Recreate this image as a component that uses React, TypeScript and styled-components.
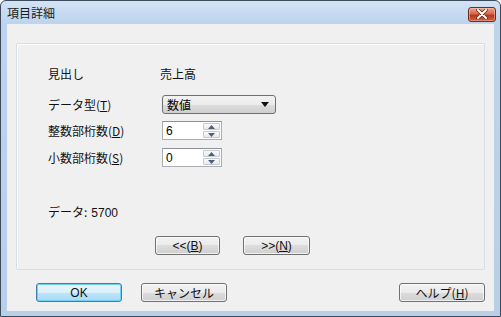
import React from "react";
import styled, { createGlobalStyle } from "styled-components";

const GlobalStyle = createGlobalStyle`
  html, body {
    margin: 0;
    padding: 0;
    background: #ffffff;
  }
  body {
    font-family: "Liberation Sans", "Noto Sans CJK JP", sans-serif;
    font-size: 12px;
    color: #000;
  }
`;

const Window = styled.div`
  width: 501px;
  height: 317px;
  box-sizing: border-box;
  border: 1px solid #3c4a5c;
  border-radius: 6px 6px 0 0;
  background: linear-gradient(to bottom, #d3e3f5 0px, #bdd3ee 22px, #b8cfea 100%);
  display: flex;
  flex-direction: column;
  overflow: hidden;
`;

const TitleBar = styled.div`
  height: 23px;
  display: flex;
  align-items: center;
  justify-content: space-between;
  padding: 0 4px 0 6px;
  flex-shrink: 0;
`;

const Title = styled.span`
  font-family: "Noto Sans CJK JP", sans-serif;
  font-size: 12px;
  line-height: 14px;
  color: #1a1a1a;
  margin-top: 1px;
`;

const CloseButton = styled.div`
  width: 28px;
  height: 15px;
  margin-top: 3px;
  box-sizing: border-box;
  border: 1px solid #6e2a1c;
  border-radius: 3px;
  background: linear-gradient(to bottom, #eaa28c 0%, #d7684a 45%, #b93a1c 55%, #cc5f3c 100%);
  box-shadow: inset 0 0 0 1px rgba(255, 210, 190, 0.45);
  display: flex;
  align-items: center;
  justify-content: center;
`;

const Client = styled.div`
  flex: 1;
  margin: 0 6px 5px 6px;
  background: #f0f0f0;
  display: flex;
  flex-direction: column;
  padding: 19px 9px 0 9px;
`;

const Panel = styled.div`
  height: 227px;
  box-sizing: border-box;
  border: 1px solid #d5dfe5;
  border-radius: 2px;
  box-shadow: inset 1px 1px 0 #ffffff;
  padding: 21px 0 0 31px;
  display: flex;
  flex-direction: column;
`;

const Row = styled.div<{ $top: number; $height: number }>`
  display: flex;
  align-items: center;
  margin-top: ${p => p.$top}px;
  height: ${p => p.$height}px;
`;

const Label = styled.div`
  width: 114px;
  font-family: "Noto Sans CJK JP", sans-serif;
  font-size: 12px;
  line-height: 14px;
  color: #111;
  white-space: nowrap;
`;

const Value = styled.div`
  font-family: "Noto Sans CJK JP", sans-serif;
  font-size: 12px;
  line-height: 14px;
  color: #111;
  margin-left: -2px;
`;

const Select = styled.div`
  width: 114px;
  height: 19px;
  box-sizing: border-box;
  border: 1px solid #707070;
  border-radius: 3px;
  background: linear-gradient(to bottom, #f2f2f2 0%, #ebebeb 50%, #dddddd 50%, #cfcfcf 100%);
  display: flex;
  align-items: center;
  justify-content: space-between;
  padding: 0 6px 0 4px;
  font-family: "Noto Sans CJK JP", sans-serif;
  font-size: 12px;
  line-height: 14px;
`;

const Spin = styled.div`
  width: 60px;
  height: 19px;
  box-sizing: border-box;
  border: 1px solid #abadb3;
  border-top-color: #8e9197;
  background: #fff;
  display: flex;
  align-items: stretch;
`;

const SpinText = styled.div`
  flex: 1;
  padding-left: 3px;
  display: flex;
  align-items: center;
  font-family: "Liberation Sans", sans-serif;
  font-size: 12px;
`;

const SpinButtons = styled.div`
  width: 17px;
  display: flex;
  flex-direction: column;
  padding: 1px;
  gap: 1px;
`;

const SpinHalf = styled.div`
  flex: 1;
  border: 1px solid #c3cad2;
  border-radius: 1px;
  background: linear-gradient(to bottom, #fbfbfc, #e6e9ee);
  display: flex;
  align-items: center;
  justify-content: center;
`;

const DataText = styled.div`
  font-family: "Noto Sans CJK JP", sans-serif;
  font-size: 12px;
  line-height: 14px;
  color: #111;
`;

const Num = styled.span`
  font-family: "Liberation Sans", sans-serif;
  margin-left: 4px;
`;

const NavRow = styled.div`
  display: flex;
  margin-top: 15px;
  margin-left: 107px;
  gap: 23px;
`;

const Button = styled.div<{ $width: number; $default?: boolean }>`
  width: ${p => p.$width}px;
  height: 19px;
  box-sizing: border-box;
  border: 1px solid ${p => (p.$default ? "#3c7fb1" : "#707070")};
  border-radius: 3px;
  background: ${p =>
    p.$default
      ? "linear-gradient(to bottom, #eaf6fd 0%, #d9f0fc 50%, #bee6fd 50%, #a7d9f5 100%)"
      : "linear-gradient(to bottom, #f2f2f2 0%, #ebebeb 50%, #dddddd 50%, #cfcfcf 100%)"};
  box-shadow: ${p =>
    p.$default ? "inset 0 0 0 1px #6fd0f3" : "inset 0 0 0 1px rgba(255,255,255,0.7)"};
  display: flex;
  align-items: center;
  justify-content: center;
  font-family: "Noto Sans CJK JP", sans-serif;
  font-size: 12px;
  line-height: 14px;
  color: #111;
`;

const Latin = styled.span`
  font-family: "Liberation Sans", sans-serif;
`;

const Footer = styled.div`
  display: flex;
  align-items: center;
  justify-content: space-between;
  margin-top: 13px;
  padding-left: 20px;
`;

const ButtonGroup = styled.div`
  display: flex;
  gap: 19px;
`;

const Arrow = ({ up }: { up?: boolean }) => (
  <svg width="7" height="4" viewBox="0 0 7 4">
    <path d={up ? "M0 4 L3.5 0 L7 4 Z" : "M0 0 L3.5 4 L7 0 Z"} fill="#4f6078" />
  </svg>
);

const SpinBox = ({ value }: { value: string }) => (
  <Spin>
    <SpinText>{value}</SpinText>
    <SpinButtons>
      <SpinHalf>
        <Arrow up />
      </SpinHalf>
      <SpinHalf>
        <Arrow />
      </SpinHalf>
    </SpinButtons>
  </Spin>
);

const App: React.FC = () => {
  return (
    <>
      <GlobalStyle />
      <Window>
        <TitleBar>
          <Title>項目詳細</Title>
          <CloseButton>
            <svg width="12" height="10" viewBox="0 0 12 10">
              <path
                d="M2 1 L10 9 M10 1 L2 9"
                stroke="#5a2418"
                strokeWidth="3.4"
                strokeLinecap="round"
              />
              <path
                d="M2 1 L10 9 M10 1 L2 9"
                stroke="#ffffff"
                strokeWidth="2"
                strokeLinecap="round"
              />
            </svg>
          </CloseButton>
        </TitleBar>
        <Client>
          <Panel>
            <Row $top={0} $height={18}>
              <Label>見出し</Label>
              <Value>売上高</Value>
            </Row>
            <Row $top={12} $height={19}>
              <Label>
                データ型(<u>T</u>)
              </Label>
              <Select>
                <span>数値</span>
                <svg width="8" height="5" viewBox="0 0 8 5">
                  <path d="M0 0 L8 0 L4 5 Z" fill="#111" />
                </svg>
              </Select>
            </Row>
            <Row $top={7} $height={19}>
              <Label>
                整数部桁数(<u>D</u>)
              </Label>
              <SpinBox value="6" />
            </Row>
            <Row $top={8} $height={19}>
              <Label>
                小数部桁数(<u>S</u>)
              </Label>
              <SpinBox value="0" />
            </Row>
            <Row $top={36} $height={18}>
              <DataText>
                データ:<Num>5700</Num>
              </DataText>
            </Row>
            <NavRow>
              <Button $width={65}>
                <Latin>
                  &lt;&lt;(<u>B</u>)
                </Latin>
              </Button>
              <Button $width={67}>
                <Latin>
                  &gt;&gt;(<u>N</u>)
                </Latin>
              </Button>
            </NavRow>
          </Panel>
          <Footer>
            <ButtonGroup>
              <Button $width={86} $default>
                <Latin>OK</Latin>
              </Button>
              <Button $width={86}>キャンセル</Button>
            </ButtonGroup>
            <Button $width={86}>
              ヘルプ(<u>H</u>)
            </Button>
          </Footer>
        </Client>
      </Window>
    </>
  );
};

export default App;
